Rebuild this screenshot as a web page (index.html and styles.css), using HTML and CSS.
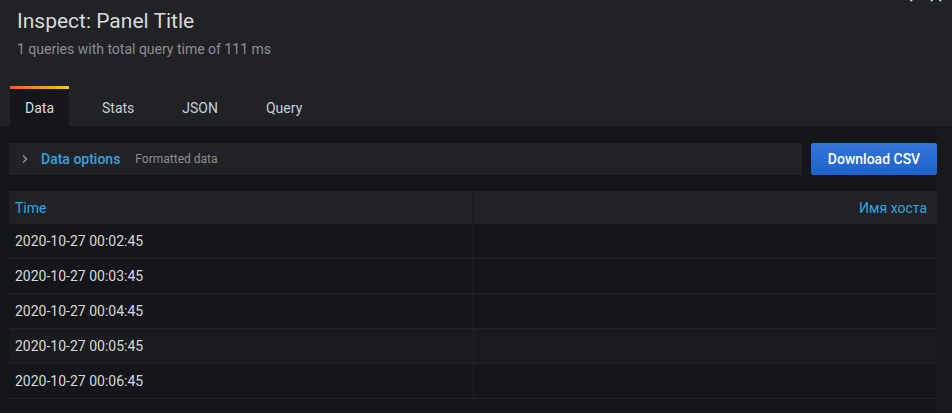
FILE: index.html
```html
<!DOCTYPE html>
<html>
<head>
    <title>Inspect: Panel Title</title>
    <link rel="stylesheet" href="styles.css">
</head>
<body>

    <div class="drawer">
        <div class="drawer-header">
            <div class="header-actions">
                <svg class="action-icon" width="16" height="16" viewBox="0 0 16 16"><path d="M10 3 L5 8 L10 13" fill="none" stroke="#c7d0d9" stroke-width="2"/></svg>
                <svg class="action-icon" width="16" height="16" viewBox="0 0 16 16"><path d="M3 3 L13 13 M13 3 L3 13" fill="none" stroke="#c7d0d9" stroke-width="2"/></svg>
            </div>
            <h3 class="drawer-title">Inspect: Panel Title</h3>
            <div class="drawer-subtitle">1 queries with total query time of 111 ms</div>
            <div class="tabs">
                <div class="tab active">Data</div>
                <div class="tab">Stats</div>
                <div class="tab">JSON</div>
                <div class="tab">Query</div>
            </div>
        </div>

        <div class="drawer-body">
            <div class="content">
                <div class="options-row">
                    <div class="data-options">
                        <svg class="chevron" width="8" height="10" viewBox="0 0 8 10"><path d="M2 1.5 L5.5 5 L2 8.5" fill="none" stroke="#8e8e8e" stroke-width="1.5"/></svg>
                        <span class="options-title">Data options</span>
                        <span class="options-desc">Formatted data</span>
                    </div>
                    <button class="btn-primary">Download CSV</button>
                </div>

                <div class="table">
                    <div class="table-head">
                        <div class="th">Time</div>
                        <div class="th th-right">Имя хоста</div>
                    </div>
                    <div class="tr"><div class="td">2020-10-27 00:02:45</div><div class="td"></div></div>
                    <div class="tr"><div class="td">2020-10-27 00:03:45</div><div class="td"></div></div>
                    <div class="tr"><div class="td">2020-10-27 00:04:45</div><div class="td"></div></div>
                    <div class="tr hovered"><div class="td">2020-10-27 00:05:45</div><div class="td"></div></div>
                    <div class="tr"><div class="td">2020-10-27 00:06:45</div><div class="td"></div></div>
                </div>
            </div>
            <div class="scroll-track"></div>
        </div>
    </div>

</body>
</html>
```

FILE: styles.css
```css
body {
    margin: 0;
    background-color: #141619;
    font-family: Roboto, "Liberation Sans", sans-serif;
    color: #d8d9da;
    height: 413px;
    overflow: hidden;
}

.drawer {
    display: flex;
    flex-direction: column;
    height: 100%;
}

.drawer-header {
    position: relative;
    background-color: #202226;
    padding: 7px 0 0 17px;
    height: 119px;
    display: flex;
    flex-direction: column;
}

.header-actions {
    position: absolute;
    top: -12px;
    right: 8px;
    display: flex;
    gap: 10px;
}

.drawer-title {
    margin: 0;
    font-size: 21px;
    font-weight: 400;
    line-height: 28px;
    color: #d8d9da;
}

.drawer-subtitle {
    margin-top: 6px;
    font-size: 14px;
    line-height: 16px;
    color: #8e8e8e;
}

.tabs {
    display: flex;
    margin-top: auto;
    margin-left: -7px;
}

.tab {
    height: 40px;
    padding: 3px 15px 0;
    margin-right: 18px;
    display: flex;
    align-items: center;
    font-size: 14px;
    color: #c7d0d9;
    box-sizing: border-box;
}

.tab.active {
    background-color: #141619;
    color: #d8d9da;
    border-top: 3px solid transparent;
    border-image: linear-gradient(to right, #f05a28, #fbca0a) 1;
    border-left: 0;
    border-right: 0;
    border-bottom: 0;
    padding-top: 0;
}

.drawer-body {
    flex: 1;
    display: flex;
}

.content {
    flex: 1;
    padding: 17px 0 0 9px;
}

.scroll-track {
    width: 15px;
    background-color: #18191c;
}

.options-row {
    display: flex;
    gap: 9px;
}

.data-options {
    flex: 1;
    height: 32px;
    background-color: #202226;
    display: flex;
    align-items: center;
    padding-left: 12px;
}

.chevron {
    margin-right: 12px;
}

.options-title {
    color: #33a2e5;
    font-size: 14px;
    font-weight: 500;
    margin-right: 15px;
}

.options-desc {
    color: #8e8e8e;
    font-size: 12px;
}

.btn-primary {
    width: 126px;
    height: 32px;
    border: 0;
    border-radius: 2px;
    background: linear-gradient(to bottom, #3274d9, #1f62d0);
    color: #ffffff;
    font-family: Roboto, "Liberation Sans", sans-serif;
    font-size: 14px;
    font-weight: 500;
    padding: 0;
}

.table {
    margin-top: 16px;
}

.table-head {
    display: grid;
    grid-template-columns: 1fr 1fr;
    background-color: #202226;
    height: 33px;
}

.th {
    display: flex;
    align-items: center;
    padding: 0 6px;
    font-size: 14px;
    color: #33a2e5;
}

.th + .th {
    border-left: 1px solid #141619;
}

.th-right {
    justify-content: flex-end;
    padding-right: 10px;
}

.tr {
    display: grid;
    grid-template-columns: 1fr 1fr;
    height: 34px;
    border-bottom: 1px solid #202226;
}

.tr.hovered {
    background-color: #1a1b1f;
}

.td {
    display: flex;
    align-items: center;
    padding: 0 6px;
    font-size: 14px;
    color: #d8d9da;
}

.td + .td {
    border-left: 1px solid #202226;
}
```
